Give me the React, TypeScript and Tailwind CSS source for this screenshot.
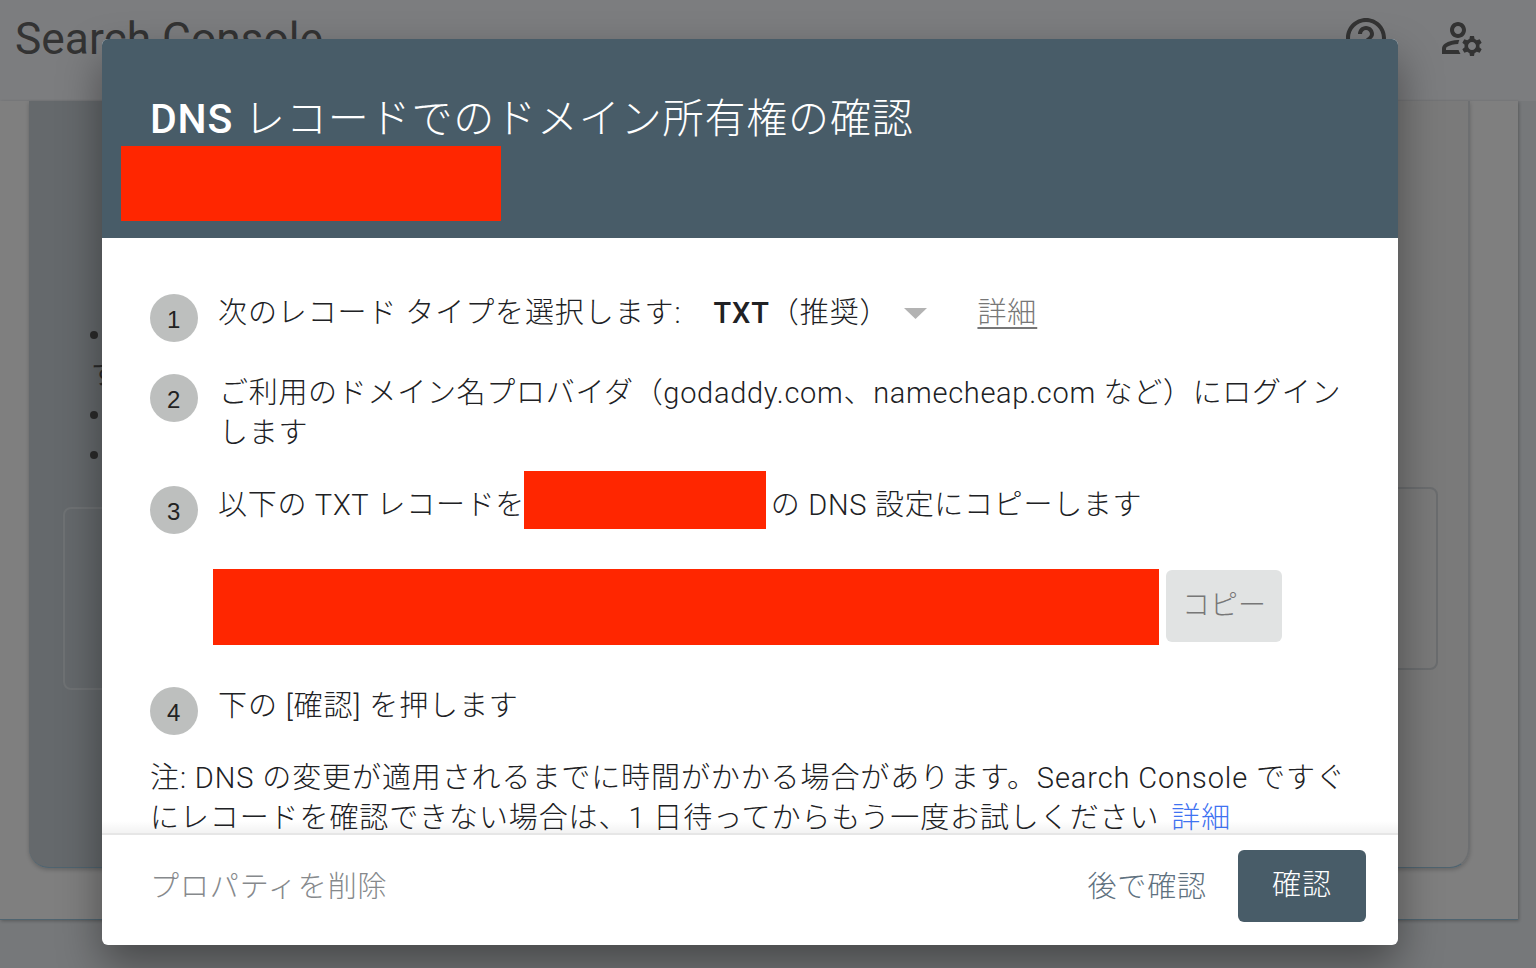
const jp = "font-['Roboto','Noto_Sans_CJK_JP',sans-serif]";

function StepNumber({ n }: { n: number }) {
  return (
    <div className="flex h-[48px] w-[48px] shrink-0 items-center justify-center rounded-full bg-[#bdbfbe] pt-[3px] font-['Liberation_Sans',sans-serif] text-[24px] text-[#222]">
      {n}
    </div>
  );
}

export default function App() {
  return (
    <div className={`relative h-[968px] w-full overflow-hidden bg-[#76787a] ${jp}`}>
      {/* dimmed page behind the dialog */}
      <header className="flex h-[101px] items-start bg-[#7c7d7f] pl-[15px] pr-[50px] pt-[14px]">
        <span className="text-[44.3px] leading-[50px] text-[#333]">Search Console</span>
        <div className="ml-auto flex gap-[48px]">
          <svg width="48" height="48" viewBox="0 0 24 24" fill="#333">
            <path d="M11 18h2v-2h-2v2zm1-16C6.48 2 2 6.48 2 12s4.48 10 10 10 10-4.48 10-10S17.52 2 12 2zm0 18c-4.41 0-8-3.59-8-8s3.59-8 8-8 8 3.59 8 8-3.59 8-8 8zm0-14c-2.21 0-4 1.79-4 4h2c0-1.1.9-2 2-2s2 .9 2 2c0 2-3 1.75-3 5h2c0-2.25 3-2.5 3-5 0-2.21-1.79-4-4-4z" />
          </svg>
          <svg width="48" height="48" viewBox="0 0 24 24" fill="#333">
            <path d="M4 18v-.65c0-.34.16-.66.41-.81C6.1 15.53 8.03 15 10 15c.03 0 .05 0 .08.01.1-.7.3-1.37.59-1.98-.22-.02-.44-.03-.67-.03-2.42 0-4.68.67-6.61 1.82-.88.52-1.39 1.5-1.39 2.53V20h9.26c-.42-.6-.75-1.28-.97-2H4z" />
            <path d="M10 12c2.21 0 4-1.79 4-4s-1.79-4-4-4-4 1.79-4 4 1.79 4 4 4zm0-6c1.1 0 2 .9 2 2s-.9 2-2 2-2-.9-2-2 .9-2 2-2z" />
            <path d="M20.75 16c0-.22-.03-.42-.06-.63l1.14-1.01-1-1.73-1.45.49c-.32-.27-.68-.48-1.08-.63L18 11h-2l-.3 1.49c-.4.15-.76.36-1.08.63l-1.45-.49-1 1.73 1.14 1.01c-.03.21-.06.41-.06.63s.03.42.06.63l-1.14 1.01 1 1.73 1.45-.49c.32.27.68.48 1.08.63L16 21h2l.3-1.49c.4-.15.76-.36 1.08-.63l1.45.49 1-1.73-1.14-1.01c.03-.21.06-.41.06-.63zM17 18c-1.1 0-2-.9-2-2s.9-2 2-2 2 .9 2 2-.9 2-2 2z" />
          </svg>
        </div>
      </header>

      <div className="h-[819px] w-[1518px] border-b border-[#4f6470] bg-[#7f7f7f] pl-[29px] shadow-[1px_1px_3px_rgba(0,0,0,0.25)]">
        <div className="flex h-[767px] w-[1441px] justify-between rounded-b-[20px] border-b border-r-2 border-b-[#4f6470] border-r-[#6d6f71] bg-gradient-to-r from-[#65696c] from-[6%] to-[#7a7a7a] to-[94%] pl-[34px] pr-[30px] shadow-[0_2px_4px_rgba(0,0,0,0.2)]">
          <div className="w-[300px]">
            <ul className="mt-[214px] flex flex-col text-[28px] leading-[40px] text-[#2b2b2b]">
              <li className="flex h-[40px] items-center pl-[27px]"><span className="h-[8px] w-[8px] rounded-full bg-[#2b2b2b]" /></li>
              <li className="h-[40px] pl-[28px]">す</li>
              <li className="flex h-[40px] items-center pl-[27px]"><span className="h-[8px] w-[8px] rounded-full bg-[#2b2b2b]" /></li>
              <li className="flex h-[40px] items-center pl-[27px]"><span className="h-[8px] w-[8px] rounded-full bg-[#2b2b2b]" /></li>
            </ul>
            <div className="mt-[32px] h-[183px] rounded-[8px] border-2 border-[#6f7274]" />
          </div>
          <div className="mt-[386px] h-[183px] w-[300px] rounded-[8px] border-2 border-[#6b6d6f]" />
        </div>
      </div>

      {/* dialog */}
      <div className="absolute left-[102px] top-[39px] flex h-[906px] w-[1296px] flex-col overflow-hidden rounded-[6px] bg-white shadow-[0_20px_44px_rgba(0,0,0,0.4)]">
        <div className="h-[199px] shrink-0 bg-[#485c68] pl-[48px] pt-[53px] text-white">
          <h1 className="text-[41px] font-light leading-[54px] tracking-[0.85px]">
            <span className="font-medium">DNS</span> レコードでのドメイン所有権の確認
          </h1>
          <div className="-ml-[29px] h-[75px] w-[380px] bg-[#ff2600]" />
        </div>

        <div className="relative min-h-0 flex-1 overflow-hidden px-[48px] pt-[56px] text-[29px] font-light leading-[40px] tracking-[0.7px] text-[#202124]">
          <div className="flex">
            <StepNumber n={1} />
            <div className="-mt-[1px] ml-[20px] flex whitespace-pre tracking-[0.9px]">
              <span>次のレコード タイプを選択します:</span>
              <span className="ml-[32px]"><span className="font-medium">TXT</span>（推奨）</span>
              <svg className="ml-[15px] mt-[15px]" width="23" height="11" viewBox="0 0 23 11" fill="#b3b3b3">
                <path d="M0 0h23L11.500 11z" />
              </svg>
              <a className="ml-[50px] text-[#777] underline decoration-2 underline-offset-4">詳細</a>
            </div>
          </div>

          <div className="mt-[32px] flex">
            <StepNumber n={2} />
            <p className="-mt-[1px] ml-[21px] w-[1130px]">ご利用のドメイン名プロバイダ（godaddy.com、namecheap.com など）にログインします</p>
          </div>

          <div className="mt-[33px] flex">
            <StepNumber n={3} />
            <p className="-mt-[1px] ml-[20px]">
              以下の TXT レコードを<span className="-my-[9px] -ml-[1px] mr-[-3px] inline-block h-[58px] w-[242px] -translate-y-[7px] bg-[#ff2600] align-middle" /> の DNS 設定にコピーします
            </p>
          </div>

          <div className="ml-[63px] mt-[35px] flex items-start">
            <div className="h-[76px] w-[946px] bg-[#ff2600]" />
            <button className="ml-[7px] mt-[1px] h-[72px] w-[116px] rounded-[6px] bg-[#e1e3e3] text-[28px] tracking-normal text-[#777]">コピー</button>
          </div>

          <div className="mt-[42px] flex">
            <StepNumber n={4} />
            <p className="-mt-[1px] ml-[20px] tracking-[0.9px]">下の [確認] を押します</p>
          </div>

          <p className="mt-[23px] w-[1210px] tracking-[0.9px]">
            注: DNS の変更が適用されるまでに時間がかかる場合があります。Search Console ですぐにレコードを確認できない場合は、1 日待ってからもう一度お試しください <a className="ml-[4px] text-[#3f73f2]">詳細</a>
          </p>

          <div className="absolute bottom-0 left-0 h-[12px] w-full bg-gradient-to-b from-transparent to-black/5" />
        </div>

        <div className="flex h-[112px] shrink-0 items-center border-t-2 border-[#e6e6e6] pb-[8px] pl-[48px] pr-[32px] text-[29px] font-light tracking-[0.9px]">
          <span className="mt-[3px] text-[#86898c]">プロパティを削除</span>
          <span className="ml-auto mt-[3px] text-[#5f7280]">後で確認</span>
          <button className="ml-[31px] h-[72px] w-[128px] rounded-[6px] bg-[#485c68] text-white">確認</button>
        </div>
      </div>
    </div>
  );
}
